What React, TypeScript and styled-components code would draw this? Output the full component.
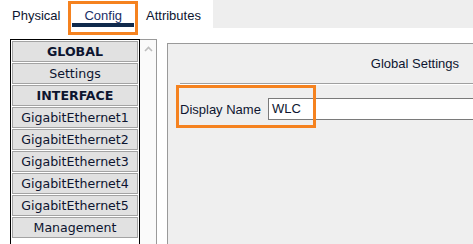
import styled, { createGlobalStyle } from "styled-components";

const GlobalStyle = createGlobalStyle`
    html, body {
        margin: 0;
        padding: 0;
        background: #ffffff;
        overflow: hidden;
    }
    body {
        font-family: "Liberation Sans", Arial, sans-serif;
        color: #0d1530;
    }
`;

const orange = "#f5821f";

const tabs = ["Physical", "Config", "Attributes"];
const menuItems = [
    { label: "GLOBAL", heading: true },
    { label: "Settings" },
    { label: "INTERFACE", heading: true },
    { label: "GigabitEthernet1" },
    { label: "GigabitEthernet2" },
    { label: "GigabitEthernet3" },
    { label: "GigabitEthernet4" },
    { label: "GigabitEthernet5" },
    { label: "Management" },
];

function App() {
    return (
        <Page>
            <GlobalStyle />
            <TabBar>
                <TabGroup>
                    {tabs.map((t) => (
                        <Tab key={t} $active={t === "Config"}>
                            {t}
                            {t === "Config" && <TabHighlight />}
                        </Tab>
                    ))}
                </TabGroup>
            </TabBar>
            <Content>
                <ScrollPane>
                    <MenuList>
                        {menuItems.map((item) => (
                            <MenuButton key={item.label} $heading={!!item.heading}>
                                {item.label}
                            </MenuButton>
                        ))}
                    </MenuList>
                    <ScrollTrack>
                        <svg width="9" height="6" viewBox="0 0 9 6">
                            <path d="M1 5 L4.5 1.5 L8 5" fill="none" stroke="#bdbdbd" strokeWidth="1.6" />
                        </svg>
                    </ScrollTrack>
                </ScrollPane>
                <Panel>
                    <PanelTitle>Global Settings</PanelTitle>
                    <Separator />
                    <FormRow>
                        <FieldLabel>Display Name</FieldLabel>
                        <TextField>WLC</TextField>
                        <FieldHighlight />
                    </FormRow>
                </Panel>
            </Content>
        </Page>
    );
}

const Page = styled.div`
    width: 473px;
    height: 244px;
    overflow: hidden;
    display: flex;
    flex-direction: column;
`;

const TabBar = styled.div`
    display: flex;
    height: 28px;
    background: #eeeeee;
    flex-shrink: 0;
    position: relative;
    z-index: 2;
`;

const TabGroup = styled.div`
    display: flex;
    background: #ffffff;
`;

const Tab = styled.div<{ $active: boolean }>`
    position: relative;
    box-sizing: border-box;
    height: 27px;
    padding: 8px 12px 0;
    font-size: 13px;
    line-height: 15px;
    color: ${({ $active }) => ($active ? "#1a2f66" : "#0d1530")};
    border-bottom: 4px solid ${({ $active }) => ($active ? "#102a4c" : "transparent")};
`;

const TabHighlight = styled.div`
    position: absolute;
    left: -4px;
    top: 1px;
    width: 70px;
    height: 34px;
    box-sizing: border-box;
    border: 3px solid ${orange};
`;

const Content = styled.div`
    display: flex;
    flex: 1;
    padding: 11px 0 0 10px;
    gap: 10px;
`;

const ScrollPane = styled.div`
    display: flex;
    width: 147px;
    flex-shrink: 0;
`;

const MenuList = styled.div`
    box-sizing: border-box;
    width: 130px;
    border: 1px solid #000000;
    border-bottom: none;
    padding: 1px;
    display: flex;
    flex-direction: column;
    gap: 1px;
    background: #ffffff;
`;

const MenuButton = styled.div<{ $heading: boolean }>`
    box-sizing: border-box;
    height: 21px;
    border: 1px solid #a3a3a3;
    background: #e1e1e1;
    display: flex;
    align-items: center;
    justify-content: center;
    font-family: "DejaVu Sans", Verdana, sans-serif;
    font-size: 12.6px;
    font-weight: ${({ $heading }) => ($heading ? 700 : 400)};
    color: #0d1530;
    white-space: nowrap;
`;

const ScrollTrack = styled.div`
    box-sizing: border-box;
    width: 17px;
    border-top: 1px solid #9a9a9a;
    border-right: 1px solid #9a9a9a;
    background: #fafafa;
    display: flex;
    justify-content: center;
    padding-top: 6px;
`;

const Panel = styled.div`
    flex: 1;
    margin-top: 4px;
    border-top: 1px solid #9a9a9a;
    border-left: 1px solid #9a9a9a;
    background: #efefef;
    display: flex;
    flex-direction: column;
`;

const PanelTitle = styled.div`
    font-size: 13px;
    line-height: 15px;
    text-align: right;
    padding: 12px 14px 0 0;
`;

const Separator = styled.div`
    margin: 12px 0 0 12px;
    height: 1px;
    background: #a0a0a0;
    border-bottom: 1px solid #ffffff;
`;

const FormRow = styled.div`
    position: relative;
    display: flex;
    align-items: center;
    gap: 7px;
    margin-top: 13px;
    padding-left: 12px;
`;

const FieldLabel = styled.span`
    font-size: 13px;
    line-height: 15px;
    white-space: nowrap;
`;

const TextField = styled.div`
    box-sizing: border-box;
    height: 22px;
    flex: 1;
    min-width: 0;
    border: 1px solid #7a7a7a;
    border-right: none;
    background: #ffffff;
    padding: 0 3px;
    font-size: 13px;
    line-height: 20px;
`;

const FieldHighlight = styled.div`
    position: absolute;
    left: 8px;
    top: -13px;
    width: 140px;
    height: 43px;
    box-sizing: border-box;
    border: 3px solid ${orange};
    pointer-events: none;
`;

export default App;
